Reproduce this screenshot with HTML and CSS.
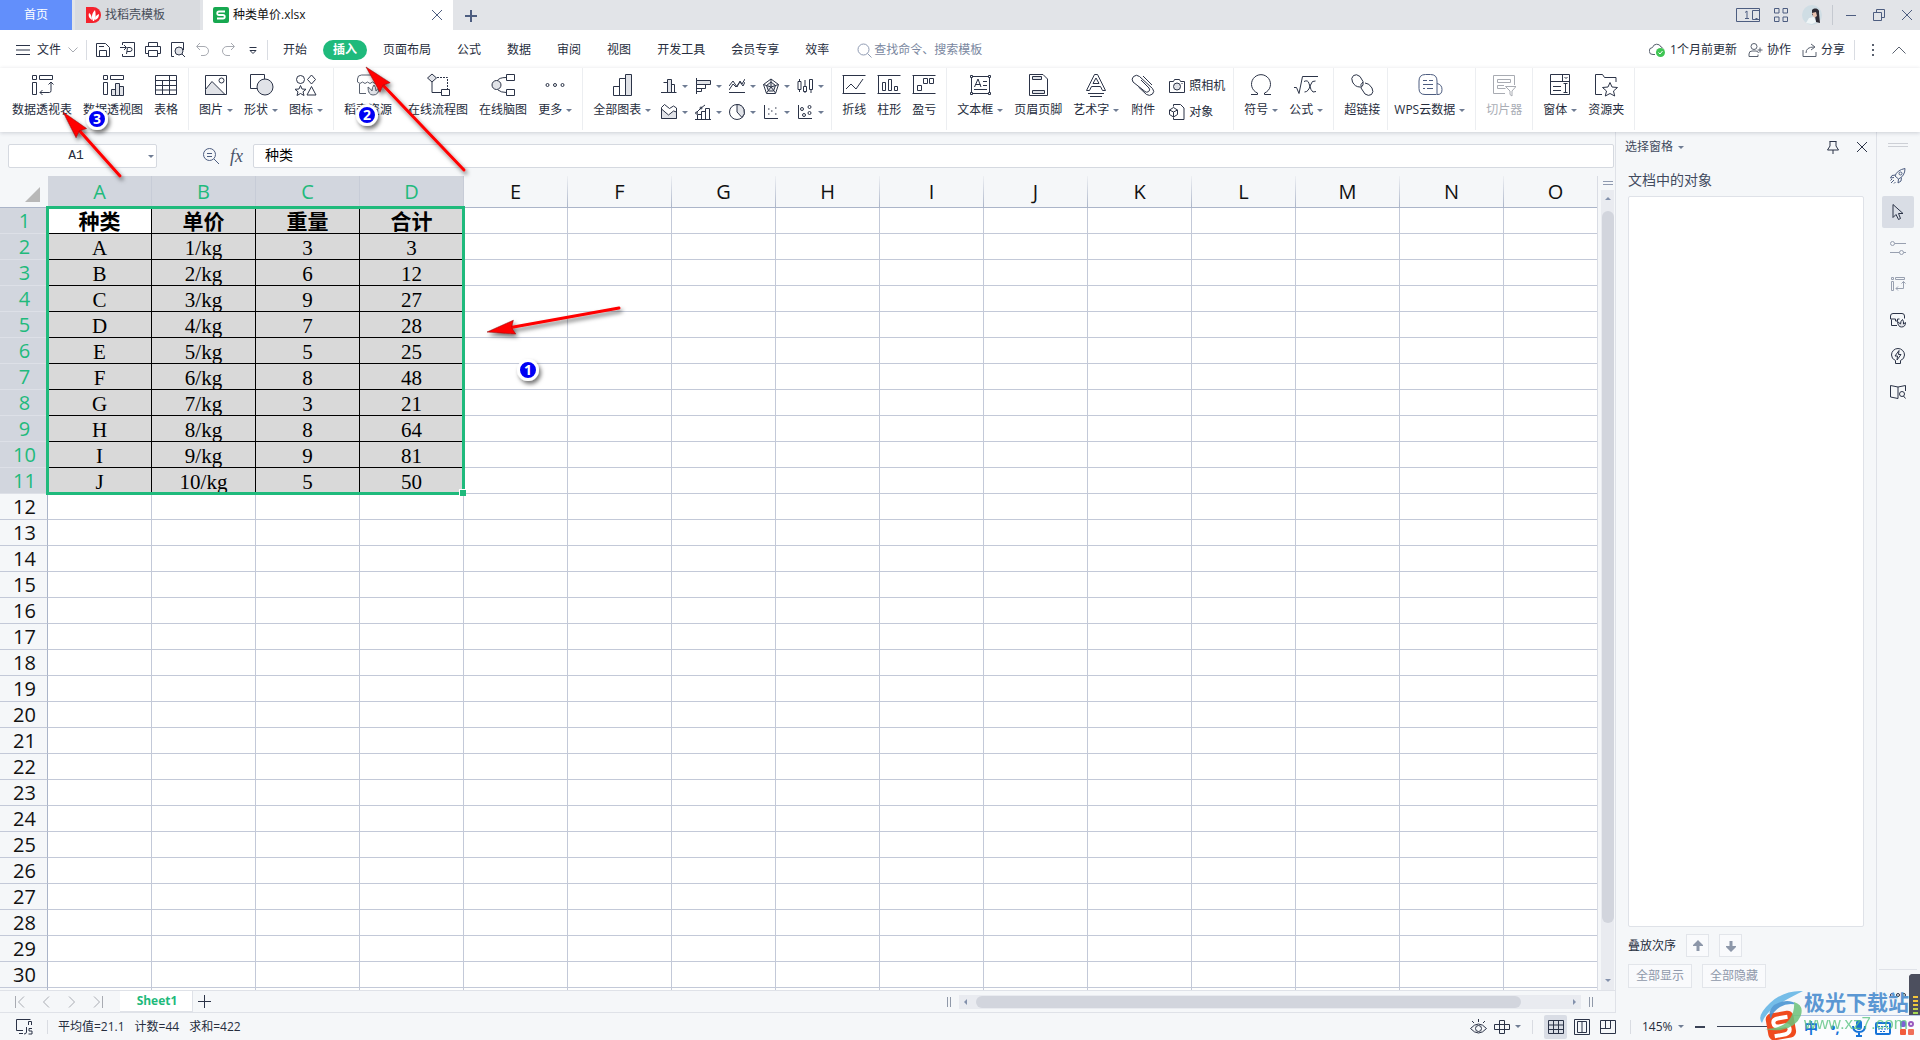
FILE: index.html
```html
<!DOCTYPE html>
<html lang="zh-CN">
<head>
<meta charset="utf-8">
<title>种类单价.xlsx</title>
<link rel="stylesheet" href="styles.css">
</head>
<body>
<header class="titlebar">
  <button class="tab tab-home">首页</button>
  <button class="tab tab-docer">
    <svg width="15" height="16" viewBox="0 0 15 16"><path fill="#f5222d" d="M0 0h7a8 8 0 0 1 0 16H0z"/><path fill="#fff" d="M7 14C5 10 6 6 9 3c1 4 1 8-1 11zM6 13C3 11 2 9 3 6c2 1 3 4 3 7zM9 13c0-3 1-5 4-6 0 3-1 5-4 6z"/></svg>
    找稻壳模板
  </button>
  <div class="tab tab-file">
    <svg width="16" height="16" viewBox="0 0 16 16"><rect width="16" height="16" rx="2" fill="#17a850"/><path d="M12 4.500H6a1.700 1.700 0 0 0 0 3.500h4a1.700 1.700 0 0 1 0 3.500H4" fill="none" stroke="#fff" stroke-width="1.8"/></svg>
    <span>种类单价.xlsx</span>
    <button class="tab-close" aria-label="关闭标签"><svg width="10" height="10" viewBox="0 0 10 10" class="slate"><path d="M0 0l10 10M10 0L0 10"/></svg></button>
  </div>
  <button class="new-tab" aria-label="新建"><svg width="12" height="12" viewBox="0 0 12 12" class="slate"><path d="M6 0v12M0 6h12" stroke-width="2"/></svg></button>
  <div class="window-tools">
    <svg width="24" height="14" viewBox="0 0 24 14" class="slate"><path d="M.5.5h23v13H.5zM23 2.500h-6.500v9H23M19.500 10.500h2M9 4.500l2-1.500V11M9 10.500h4"/></svg>
    <svg width="14" height="14" viewBox="0 0 14 14" class="slate"><path d="M.5.5h4.500v4.500H.5zM9 .5h4.500v4.500H9zM.5 9h4.500v4.500H.5zM9 9h4.500v4.500H9z"/></svg>
    <svg width="20" height="20" viewBox="0 0 20 20"><circle cx="10" cy="10" r="10" fill="#cfdde4"/><path d="M10 5c3-3 8-1 7 3l1 10-4-1-1-6-3-1z" fill="#2c2a33"/><path d="M10 8l4-1 1 4-3 2z" fill="#e6c1ae"/><path d="M7 13l5-1 2 5-4 2-6-1z" fill="#eff5f7"/></svg>
    <i class="divider"></i>
    <button aria-label="最小化"><svg width="12" height="12" viewBox="0 0 12 12" class="slate"><path d="M1 6.500h10"/></svg></button>
    <button aria-label="还原"><svg width="12" height="12" viewBox="0 0 12 12" class="slate"><path d="M.5 3.500h8v8h-8zM3.500 3.500v-3h8v8h-3"/></svg></button>
    <button aria-label="关闭"><svg width="12" height="12" viewBox="0 0 12 12" class="slate"><path d="M1 1l10 10M11 1L1 11"/></svg></button>
  </div>
</header>

<nav class="menubar">
  <button class="file-menu">
    <svg width="14" height="10" viewBox="0 0 14 10" class="ink"><path d="M0 .5h14M0 5h14M0 9.500h14"/></svg>
    文件
    <svg width="10" height="6" viewBox="0 0 10 6" class="pale"><path d="M.5.5L5 5 9.500.5"/></svg>
  </button>
  <i class="divider"></i>
  <div class="quick">
    <button aria-label="保存"><svg width="16" height="16" viewBox="0 0 16 16" class="ink"><path d="M1.500 1.500h9l4 4v9h-13zM4.500 14V8.500h7V14M4 4.500h5"/></svg></button>
    <button aria-label="输出为PDF"><svg width="16" height="16" viewBox="0 0 16 16" class="ink"><path d="M2.500 3V.5h12v14h-12V12M0 5.500h6M4 3l2.500 2.500L4 8M6.500 12l1-6.500H10a2 2 0 0 1 0 4H7"/></svg></button>
    <button aria-label="打印"><svg width="16" height="16" viewBox="0 0 16 16" class="ink"><path d="M3.500 4V.5h9V4M3.500 11.500h-3v-7h15v7h-3M3.500 8.500h9v6h-9z"/></svg></button>
    <button aria-label="打印预览"><svg width="16" height="16" viewBox="0 0 16 16" class="ink"><path d="M4 14.500H1.500V.5h12V8M12 12l3 3"/><circle cx="9" cy="9" r="4" fill="#dfe1e6"/></svg></button>
    <button aria-label="撤销"><svg width="16" height="16" viewBox="0 0 16 16" class="pale"><path d="M5 1L1.500 4.500 5 8M2 4.500h7a4.500 4.500 0 0 1 0 9H6"/></svg></button>
    <button aria-label="恢复"><svg width="16" height="16" viewBox="0 0 16 16" class="pale"><path d="M11 1l3.500 3.500L11 8M14 4.500H7a4.500 4.500 0 0 0 0 9h3"/></svg></button>
    <button aria-label="自定义快速访问"><svg width="16" height="16" viewBox="0 0 16 16" class="ink"><path d="M4.500 5.500h7M5 8.500l3 3 3-3z"/></svg></button>
  </div>
  <i class="divider"></i>
  <div class="menu-tabs">
    <button>开始</button><button class="active">插入</button><button>页面布局</button><button>公式</button><button>数据</button><button>审阅</button><button>视图</button><button>开发工具</button><button>会员专享</button><button>效率</button>
  </div>
  <label class="search">
    <svg width="15" height="15" viewBox="0 0 15 15"><circle cx="6.500" cy="6.500" r="5.500"/><path d="M10.500 10.500l4 4"/></svg>
    <input type="text" placeholder="查找命令、搜索模板" aria-label="查找命令、搜索模板">
  </label>
  <div class="account">
    <button><svg width="17" height="15" viewBox="0 0 17 15" class="grey"><path d="M6 11.500H4a3.500 3.500 0 0 1-.5-7 4.500 4.500 0 0 1 8.500-.5 3 3 0 0 1 2 1.500"/><circle cx="11.500" cy="9.500" r="4.500" fill="#3fc553" stroke="none"/><path d="M9.500 9.500l1.500 1.500 2.500-3" stroke="#fff"/></svg>1个月前更新</button>
    <button><svg width="15" height="14" viewBox="0 0 15 14" class="grey"><circle cx="6" cy="3.500" r="3"/><path d="M1 13.500V11q0-3 3-3h4q2 0 2.500 2M1 13.500h9v-2M12 4.500v5M9.500 7h5"/></svg>协作</button>
    <button><svg width="15" height="14" viewBox="0 0 15 14" class="grey"><path d="M1 7v6.500h13V9M4 10q0-6 8-6M9 1l4 3-4 3"/></svg>分享</button>
    <i class="divider"></i>
    <button aria-label="更多"><svg width="16" height="14" viewBox="0 0 16 14"><path fill="#59616f" d="M7 1h2v2H7zM7 6h2v2H7zM7 11h2v2H7z"/></svg></button>
    <button aria-label="收起功能区"><svg width="14" height="8" viewBox="0 0 14 8" class="grey"><path d="M.5 7.500L7 1l6.500 6.500"/></svg></button>
  </div>
</nav>

<section class="ribbon">
  <div class="group">
    <button><svg width="24" height="24" viewBox="0 0 24 24" class="ink"><path d="M2.500 2.500h4v4h-4zM9.500 2.500h13v4h-13zM2.500 9.500h4v12h-4zM10 19.500h9.500q1.500 0 1.500-2V9M12.500 17L10 19.500l2.500 2.500M18.500 11.500L21 9l2.500 2.500"/></svg><span>数据透视表</span></button>
    <button><svg width="24" height="24" viewBox="0 0 24 24" class="ink"><path d="M2.500 2.500h4v4h-4zM9.500 2.500h13v4h-13zM2.500 9.500h4v12h-4z"/><path class="tint" d="M10.500 16.500h4v6h-4zM14.500 10.500h4v12h-4zM18.500 13.500h4v9h-4z"/></svg><span>数据透视图</span></button>
    <button><svg width="24" height="24" viewBox="0 0 24 24" class="ink"><path d="M1.500 2.500h21v19h-21zM1.500 7.500h21M1.500 12.500h21M1.500 17h21M8.500 7.500V22M15.500 2.500V22"/></svg><span>表格</span></button>
  </div>
  <div class="group">
    <button><svg width="24" height="24" viewBox="0 0 24 24" class="ink"><path d="M1.500 2.500h21v19h-21z"/><path class="tint" d="M1.500 16.500L8 8.500l13 13h-19.500z"/><circle cx="17.500" cy="7.500" r="2.500"/></svg><span class="drop">图片</span></button>
    <button><svg width="26" height="24" viewBox="0 0 26 24" class="ink"><path d="M2.500 1.500h14v14h-14z"/><circle class="tint" cx="17" cy="14" r="8"/></svg><span class="drop">形状</span></button>
    <button><svg width="24" height="24" viewBox="0 0 24 24" class="ink"><circle cx="6.500" cy="6.500" r="4"/><path d="M17.500 2l4 4.500-4 4.500-4-4.500zM17.500 13.500l4.500 8.500h-9zM6.500 12.500l1.500 3.500 4 .3-3 2.500 1 3.700-3.500-2-3.500 2 1-3.700-3-2.500 4-.3z"/></svg><span class="drop">图标</span></button>
  </div>
  <div class="group">
    <button class="wide"><svg width="24" height="24" viewBox="0 0 24 24" class="grey"><path d="M10 20.500H3.500V11M1.500 9V6q0-4 4-4h12q4 0 4 4v3M1.500 9q2.500 3 5 0 2.500 3 5 0 2.500 3 5 0 2.500 3 5 0"/><path class="tint" d="M17 22q-5 0-5-8 3 2 4 4 0-4 2-6 2 2 2 6 1-2 3-3 0 7-6 7z"/></svg><span>稻壳资源</span></button>
    <button><svg width="24" height="24" viewBox="0 0 24 24" class="ink"><path class="tint" d="M6 1l4.500 4L6 9 1.500 5z"/><path d="M6 9v10.500h9.500M15.500 16.500h8v6h-8z"/><path d="M11 4.500h10.500V16" stroke-dasharray="2 1"/></svg><span>在线流程图</span></button>
    <button><svg width="24" height="24" viewBox="0 0 24 24" class="ink"><path d="M15.500 1.500h8v6h-8zM15.500 16.500h8v6h-8zM6 8q2-3.500 9-3.500M7 17q3 2.500 8.500 2.500"/><circle class="tint" cx="5.500" cy="12" r="4.500"/></svg><span>在线脑图</span></button>
    <button><svg width="24" height="24" viewBox="0 0 24 24" class="ink"><circle cx="4.500" cy="12" r="1.500"/><circle cx="12" cy="12" r="1.500"/><circle cx="19.500" cy="12" r="1.500"/></svg><span class="drop">更多</span></button>
  </div>
  <div class="group flush">
    <button><svg width="24" height="24" viewBox="0 0 24 24" class="ink"><path d="M3.500 13.500h6v9h-6zM9.500 5.500h6v17h-6z"/><path class="tint" d="M15.500 1.500h6v21h-6z"/></svg><span class="drop">全部图表</span></button>
    <div class="minis">
      <button aria-label="柱形图"><svg width="16" height="16" viewBox="0 0 16 16" class="ink"><path d="M2.500 4.500h4v10h-4M10.500 6.500h3v8M0 14.500h15.500"/><path class="tint" d="M6.500 1.500h4v13h-4z"/></svg></button>
      <button aria-label="条形图"><svg width="16" height="16" viewBox="0 0 16 16" class="ink"><path d="M1.500 0v16M1.500 6.500h9v4h-9M1.500 10.500h5v3h-5"/><path class="tint" d="M1.500 2.500h14v4h-14z"/></svg></button>
      <button aria-label="折线图"><svg width="16" height="16" viewBox="0 0 16 16" class="ink"><path d="M0 8l4-5 4 6 3-6 2 3 3-5M0 12l4-6 3 3 4-5 3 4 2-4M0 14.500h16"/></svg></button>
      <button aria-label="雷达图"><svg width="16" height="16" viewBox="0 0 16 16" class="ink"><path d="M8 1l7.500 5.500-3 9h-9l-3-9z"/><path class="tint" d="M8 4l4.500 3.500-2 5.500h-5l-2-5.500z"/><path d="M8 1v8M.5 6.500L8 9l7.500-2.500M3.500 15L8 9l4.500 6"/></svg></button>
      <button aria-label="股价图"><svg width="16" height="16" viewBox="0 0 16 16" class="ink"><path d="M1 3.500h3v8H1zM2.500 1v2.500M2.500 11.500V14M6.500 8.500h3v5h-3zM8 2v6.500M8 13.500V15M12.500 1.500h3v10h-3zM14 11.500V15"/></svg></button>
      <button aria-label="面积图"><svg width="16" height="16" viewBox="0 0 16 16" class="ink"><path d="M.5 14.500V3.500l3-3 5 4 4-2.500 3 2v10.500"/><path class="tint" d="M.5 5l7 6 5-4 3 1v6.500H.5z"/></svg></button>
      <button aria-label="组合图"><svg width="16" height="16" viewBox="0 0 16 16" class="ink"><path d="M2.500 10.500h4v5h-4zM6.500 7.500h4v8h-4zM10.500 4.500h4v11h-4zM0 15.500h16M1.500 8.500L6 4l4-3"/><circle cx="1.500" cy="9" r="1"/><circle cx="6" cy="4" r="1"/></svg></button>
      <button aria-label="饼图"><svg width="16" height="16" viewBox="0 0 16 16" class="ink"><circle cx="8" cy="8" r="7.500"/><path class="tint" d="M8 .5V8l5 5.500A7.500 7.500 0 0 0 8 .5z"/></svg></button>
      <button aria-label="散点图"><svg width="16" height="16" viewBox="0 0 16 16" class="ink"><path d="M1.500 1v13.500H15M5 10h1.500M8 7h1.500M5 5h1.500M12 4h1.500M12 10h1.500"/></svg></button>
      <button aria-label="气泡图"><svg width="16" height="16" viewBox="0 0 16 16" class="ink"><path d="M1.500 1v13.500H15"/><circle cx="5" cy="5" r="1.500"/><circle cx="12.500" cy="3" r="1.500"/><circle cx="7" cy="11" r="1.500"/><circle cx="12.500" cy="9" r="1.500"/></svg></button>
    </div>
  </div>
  <div class="group">
    <button><svg width="24" height="24" viewBox="0 0 24 24" class="ink"><path d="M.5 2.500h23M.5 20.500h23M1.500 2v19M4 16l5-5 5 5 7-10"/></svg><span>折线</span></button>
    <button><svg width="24" height="24" viewBox="0 0 24 24" class="ink"><path d="M.5 2.500h23M.5 20.500h23M1.500 2v19M5.500 17.500v-8h3v8zM11.500 17.500V6.500h3v11zM17.500 17.500v-4h3v4z"/></svg><span>柱形</span></button>
    <button><svg width="24" height="24" viewBox="0 0 24 24" class="ink"><path d="M.5 2.500h23M.5 20.500h23M1.500 2v19M5.500 12.500h4v5h-4zM11.500 5.500h4v5h-4zM17.500 5.500h4v5h-4z"/></svg><span>盈亏</span></button>
  </div>
  <div class="group">
    <button><svg width="24" height="24" viewBox="0 0 24 24" class="ink"><path d="M3.500 3.500h18v17h-18zM6.500 14L10 6l3 8M7.500 11.500h5M15 8.500h4M15 12.500h4M6 16.500h13"/><path fill="#fff" d="M2.500 2.500h2v2h-2zM20.500 2.500h2v2h-2zM2.500 19.500h2v2h-2zM20.500 19.500h2v2h-2z"/></svg><span class="drop">文本框</span></button>
    <button><svg width="24" height="24" viewBox="0 0 24 24" class="ink"><path d="M3.500 1.500H17L21.500 6v16.500h-18z"/><path class="tint" d="M6.500 3.500h9v3h-9zM6.500 17.500h12v3h-12z"/></svg><span>页眉页脚</span></button>
    <button><svg width="24" height="24" viewBox="0 0 24 24" class="ink"><path d="M2.500 17.500L10.500 1.500h3l8 16h-3l-2-4h-9l-2 4zM9 10.500h6L12 5zM4 20.500h16M6 23.500h12"/></svg><span class="drop">艺术字</span></button>
    <button><svg width="26" height="24" viewBox="0 0 26 24" class="ink"><path d="M11 7l8 8q1.500 2-.3 3.500-2 1.500-3.700 0L3 9Q1 6 3.500 3.500q3-2.500 6 0l13 12q2.500 3 0 5.500-3 2.500-6 .5L8.500 14M13 3l9 9"/></svg><span>附件</span></button>
    <div class="pair">
      <button><svg width="16" height="16" viewBox="0 0 16 16" class="ink"><path d="M.5 3.500h4l1-2h5l1 2h4v11H.5z"/><circle class="tint" cx="8" cy="8.500" r="3.500"/><path d="M12.500 5.500h1"/></svg>照相机</button>
      <button><svg width="16" height="16" viewBox="0 0 16 16" class="ink"><path d="M4.500 2.500V.5h7l3.500 3.500v11.500H4.500v-2M4.500 3.500L8.500 6v4.500L4.500 13 .5 10.500V6zM.5 6l4 2 4-2M4.500 8v5"/></svg>对象</button>
    </div>
  </div>
  <div class="group">
    <button><svg width="24" height="24" viewBox="0 0 24 24" class="ink"><path d="M2 21.500h6.500v-1.500A9.500 9.500 0 1 1 15.500 20v1.500H22"/></svg><span class="drop">符号</span></button>
    <button><svg width="24" height="24" viewBox="0 0 24 24" class="ink"><path d="M0 14.500h2.500L5 20.500 8.500 3.500H24M10 8.500q4-2 5 2l2 6q1.500 4 5 2M21.500 8q-3.500-1-5 4-2 7-6 7"/></svg><span class="drop">公式</span></button>
  </div>
  <div class="group tight">
    <button><svg width="24" height="24" viewBox="0 0 24 24" class="ink"><path d="M10 14Q5 14 2.500 9 .5 5 3.500 2.500q3-2 6.500 1l3 5q1 4-2 6M15 10q4 0 7 5 2 4-.5 6.500-3 2-6.500-.5l-4-6q-1-4 2-6"/></svg><span>超链接</span></button>
  </div>
  <div class="group cloud">
    <button><svg width="26" height="24" viewBox="0 0 26 24" class="slate"><path d="M19.500 21.500H8q-6 0-6-6V8q0-6.500 6.500-6.500h5q6.500 0 6.500 6.500v13.500q5 .5 5-5 0-5-5-6M6 7.500h4M12 7.500h4M6 11.500h10M6 15.500h2M10 15.500h6"/></svg><span class="drop">WPS云数据</span></button>
  </div>
  <div class="group">
    <button disabled><svg width="24" height="24" viewBox="0 0 24 24" class="pale"><path d="M13 20.500H1.500v-18h21V12M5.500 6.500h13v3h-13zM12 12.500H5.500v3h8M13.500 13.500h10.500l-4 4.500v5l-2-1.500V18z"/></svg><span>切片器</span></button>
  </div>
  <div class="group">
    <button><svg width="24" height="24" viewBox="0 0 24 24" class="ink"><path d="M2.500 1.500h19v20h-19zM2.500 8.500h19M14.500 1.500v7M16.500 4l1.500 1.500L19.500 4M5 13.500h8M5 17.500h8M17.500 10.500v9M15.500 10.500h4M15.500 19.500h4"/></svg><span class="drop">窗体</span></button>
    <button><svg width="24" height="24" viewBox="0 0 24 24" class="ink"><path d="M8 21.500H1.500v-20h7l2 3h11.500V9M16 9.500l2 4.500 5.500.5-4 3.500 1.200 5-4.700-2.500-4.700 2.500 1.200-5-4-3.500 5.500-.5z"/></svg><span>资源夹</span></button>
  </div>
</section>

<main class="workspace">
  <section class="book">
    <div class="formula-bar">
      <div class="name-box"><input type="text" value="A1" aria-label="名称框"><button aria-label="名称列表" class="drop"></button></div>
      <svg width="18" height="18" viewBox="0 0 18 18" class="slate zoom-icon"><circle cx="7.500" cy="7.500" r="6"/><path d="M12 12l5 5M5 6.500h5M5 9.500h5"/></svg>
      <button class="fx">fx</button>
      <input class="formula" type="text" value="种类" aria-label="编辑栏">
    </div>

    <div class="sheet">
      <div class="grid">
        <table>
          <colgroup><col class="c-head"><col span="15" class="c-data"></colgroup>
          <thead>
            <tr><th class="corner"><svg width="15" height="15" viewBox="0 0 15 15"><path d="M15 0v15H0z" fill="#b8b8b8"/></svg></th><th class="on">A</th><th class="on">B</th><th class="on">C</th><th class="on">D</th><th>E</th><th>F</th><th>G</th><th>H</th><th>I</th><th>J</th><th>K</th><th>L</th><th>M</th><th>N</th><th>O</th></tr>
          </thead>
          <tbody class="picked">
            <tr class="names"><th>1</th><td class="current">种类</td><td>单价</td><td>重量</td><td>合计</td><td colspan="11" class="blank"></td></tr>
            <tr><th>2</th><td>A</td><td>1/kg</td><td>3</td><td>3</td><td colspan="11" class="blank"></td></tr>
            <tr><th>3</th><td>B</td><td>2/kg</td><td>6</td><td>12</td><td colspan="11" class="blank"></td></tr>
            <tr><th>4</th><td>C</td><td>3/kg</td><td>9</td><td>27</td><td colspan="11" class="blank"></td></tr>
            <tr><th>5</th><td>D</td><td>4/kg</td><td>7</td><td>28</td><td colspan="11" class="blank"></td></tr>
            <tr><th>6</th><td>E</td><td>5/kg</td><td>5</td><td>25</td><td colspan="11" class="blank"></td></tr>
            <tr><th>7</th><td>F</td><td>6/kg</td><td>8</td><td>48</td><td colspan="11" class="blank"></td></tr>
            <tr><th>8</th><td>G</td><td>7/kg</td><td>3</td><td>21</td><td colspan="11" class="blank"></td></tr>
            <tr><th>9</th><td>H</td><td>8/kg</td><td>8</td><td>64</td><td colspan="11" class="blank"></td></tr>
            <tr><th>10</th><td>I</td><td>9/kg</td><td>9</td><td>81</td><td colspan="11" class="blank"></td></tr>
            <tr><th>11</th><td>J</td><td>10/kg</td><td>5</td><td>50</td><td colspan="11" class="blank"></td></tr>
          </tbody>
          <tbody>
            <tr><th>12</th><td colspan="15" class="blank"></td></tr>
            <tr><th>13</th><td colspan="15" class="blank"></td></tr>
            <tr><th>14</th><td colspan="15" class="blank"></td></tr>
            <tr><th>15</th><td colspan="15" class="blank"></td></tr>
            <tr><th>16</th><td colspan="15" class="blank"></td></tr>
            <tr><th>17</th><td colspan="15" class="blank"></td></tr>
            <tr><th>18</th><td colspan="15" class="blank"></td></tr>
            <tr><th>19</th><td colspan="15" class="blank"></td></tr>
            <tr><th>20</th><td colspan="15" class="blank"></td></tr>
            <tr><th>21</th><td colspan="15" class="blank"></td></tr>
            <tr><th>22</th><td colspan="15" class="blank"></td></tr>
            <tr><th>23</th><td colspan="15" class="blank"></td></tr>
            <tr><th>24</th><td colspan="15" class="blank"></td></tr>
            <tr><th>25</th><td colspan="15" class="blank"></td></tr>
            <tr><th>26</th><td colspan="15" class="blank"></td></tr>
            <tr><th>27</th><td colspan="15" class="blank"></td></tr>
            <tr><th>28</th><td colspan="15" class="blank"></td></tr>
            <tr><th>29</th><td colspan="15" class="blank"></td></tr>
            <tr><th>30</th><td colspan="15" class="blank"></td></tr>
            <tr><th></th><td colspan="15" class="blank"></td></tr>
          </tbody>
        </table>
        <div class="selection"></div>
      </div>
      <div class="vscroll">
        <i class="split"></i>
        <div class="vtrack"><i class="arrow up"></i><i class="vthumb"></i><i class="arrow down"></i></div>
      </div>
    </div>

    <div class="sheet-bar">
      <div class="sheet-nav">
        <button aria-label="第一个"><svg width="10" height="12" viewBox="0 0 10 12" class="pale"><path d="M.5 0v12M9 .5L3.500 6 9 11.500"/></svg></button>
        <button aria-label="上一个"><svg width="10" height="12" viewBox="0 0 10 12" class="pale"><path d="M8 .5L2.500 6 8 11.500"/></svg></button>
        <button aria-label="下一个"><svg width="10" height="12" viewBox="0 0 10 12" class="pale"><path d="M2 .5L7.500 6 2 11.500"/></svg></button>
        <button aria-label="最后一个"><svg width="10" height="12" viewBox="0 0 10 12" class="pale"><path d="M9.500 0v12M1 .5L6.500 6 1 11.500"/></svg></button>
      </div>
      <button class="sheet-tab">Sheet1</button>
      <button class="add-sheet" aria-label="新建工作表"><svg width="13" height="13" viewBox="0 0 13 13" class="ink"><path d="M6.500 0v13M0 6.500h13"/></svg></button>
      <div class="hscroll">
        <i class="grip"></i>
        <div class="htrack"><i class="arrow left"></i><i class="hthumb"></i><i class="arrow right"></i></div>
        <i class="grip"></i>
      </div>
    </div>
  </section>

  <aside class="pane">
    <div class="pane-head">
      <button class="drop">选择窗格</button>
      <button class="pin" aria-label="固定"><svg width="14" height="14" viewBox="0 0 14 14" class="ink"><path d="M3.500 1.500h7M4 1.500V6L1.500 10h11L10 6V1.500M7 10v4"/></svg></button>
      <button aria-label="关闭窗格"><svg width="12" height="12" viewBox="0 0 12 12" class="ink"><path d="M1 1l10 10M11 1L1 11"/></svg></button>
    </div>
    <h2>文档中的对象</h2>
    <div class="object-list"></div>
    <div class="order"><span>叠放次序</span>
      <button aria-label="上移"><svg width="10" height="12" viewBox="0 0 10 12"><path fill="#8d97a9" d="M5 0l5 5v1H6.500v5h-3V6H0V5z"/></svg></button>
      <button aria-label="下移"><svg width="10" height="12" viewBox="0 0 10 12"><path fill="#8d97a9" d="M5 12l5-5V6H6.500V1h-3v5H0v1z"/></svg></button>
    </div>
    <div class="show"><button>全部显示</button><button>全部隐藏</button></div>
  </aside>

  <nav class="rail">
    <i class="handle"></i>
    <button aria-label="启动"><svg width="16" height="16" viewBox="0 0 16 16" class="slate"><path d="M5 8q2-6 10-7.500Q15 8 8.500 11zM5.500 7L2 7.500.5 10 4 9.500M8.500 11L8 15l3-2 .5-3.500M4 12l-3 3M2 11l-1.500 1.500M5.500 14L4 15.500"/><circle cx="10.500" cy="5.500" r="1.500"/></svg></button>
    <button class="active" aria-label="选择"><svg width="16" height="16" viewBox="0 0 16 16" class="ink"><path d="M3 .5v13l3-3 2.500 5 2-1L8.500 9.500h4.500z"/></svg></button>
    <button aria-label="属性"><svg width="16" height="16" viewBox="0 0 16 16" class="mid"><circle cx="2.500" cy="3.500" r="2"/><circle cx="11.500" cy="12.500" r="2"/><path d="M4.500 3.500H16M0 12.500h9.500M13.500 12.500H16"/></svg></button>
    <button aria-label="透视表"><svg width="16" height="16" viewBox="0 0 16 16" class="mid"><path d="M1.500 1.500h2v2h-2zM5.500 1.500h9v2h-9zM1.500 5.500h2v9h-2zM6 12.500h7.500v-7M8 10.500l-2 2 2 2M11.500 7.500l2-2 2 2"/></svg></button>
    <button aria-label="稻壳资源"><svg width="16" height="16" viewBox="0 0 16 16" class="ink"><path d="M7 13.500H1.500V7.500M.5 7V4q0-2.500 2.500-2.500h9q2.500 0 2.500 2.500v2.500M.5 7h5v2h2V7h2"/><path class="tint" d="M11.500 15Q8 15 7.500 9.500l3 2.500q0-3 2-4.500 1.500 2 1 4.500l2-1.500q0 4.500-4 4.500z"/></svg></button>
    <button aria-label="灵感"><svg width="16" height="16" viewBox="0 0 16 16" class="ink"><path d="M5.500 12.500Q1.500 11 1.500 7a6.500 6.500 0 0 1 13 0q0 4-4 5.500v3h-5zM9 2.500L5 8h2.500L7 12l4-5.500H8.500z"/></svg></button>
    <button aria-label="帮助"><svg width="16" height="16" viewBox="0 0 16 16" class="ink"><path d="M8 14.500L.5 13V1.500L8 3l7.500-1.500V7M8 3v11.500"/><circle cx="12" cy="10" r="2.500"/><path d="M13.500 12l2 2.500"/></svg></button>
    <button class="more" aria-label="更多"><svg width="16" height="4" viewBox="0 0 16 4" class="ink"><circle cx="2" cy="2" r="1.500"/><circle cx="8" cy="2" r="1.500"/><circle cx="14" cy="2" r="1.500"/></svg></button>
  </nav>
</main>

<footer class="statusbar">
  <svg width="17" height="16" viewBox="0 0 17 16" class="ink macro"><path d="M7 11.500H.5v-11h14M3 14.500h4M10.500 8v5q0 2-2.500 2M16 9.500h-3v2.500h3v3h-3.500M12.500 6V2.500h3V6"/></svg>
  <i class="divider"></i>
  <p class="stats"><span>平均值=21.1</span><span>计数=44</span><span>求和=422</span></p>
  <div class="views">
    <button aria-label="护眼模式"><svg width="17" height="16" viewBox="0 0 17 16" class="ink"><path d="M.5 9.500q8-9 16 0-8 9-16 0zM8.500 0v3M2 2l2 2M15 2l-2 2"/><circle cx="8.500" cy="9.500" r="3"/></svg></button>
    <button class="drop" aria-label="阅读模式"><svg width="16" height="16" viewBox="0 0 16 16" class="ink"><path d="M5.500 1.500h5v13h-5zM.5 5.500h15v5H.5z"/></svg></button>
    <i class="divider"></i>
    <button class="view active" aria-label="普通视图"><svg width="16" height="14" viewBox="0 0 16 14" class="ink"><path d="M.5.5h15v13H.5zM.5 5h15M.5 9.500h15M5.500.5v13M10.500.5v13"/></svg></button>
    <button class="view" aria-label="页面布局"><svg width="16" height="16" viewBox="0 0 16 16" class="ink"><path d="M.5.5h15v15H.5zM3.500 2.500h9v11h-9zM8 2.500v11"/></svg></button>
    <button class="view" aria-label="分页预览"><svg width="16" height="14" viewBox="0 0 16 14" class="ink"><path d="M.5.5h15v13H.5zM.5 8.500h10M5.500.5v8M10.500.5v8"/></svg></button>
    <i class="divider"></i>
    <button class="drop zoom-value">145%</button>
    <button aria-label="缩小"><svg width="10" height="4" viewBox="0 0 10 4"><path d="M0 1h10v2H0z" fill="#3a4256"/></svg></button>
    <input class="zoom-slider" type="range" min="10" max="400" value="145" aria-label="缩放">
  </div>
</footer>

<div class="tray">
  <div class="meter"></div>
  <div class="ime"><span>中</span><span>•,</span>
    <svg width="14" height="18" viewBox="0 0 14 18"><rect x="4" y="1" width="6" height="10" rx="3" fill="#1673d8"/><path d="M1 7q0 6 6 6t6-6M7 13v4M4 17h6" fill="none" stroke="#1673d8" stroke-width="2"/></svg>
    <svg width="16" height="13" viewBox="0 0 16 13"><rect x="1" y="1" width="14" height="11" rx="1" stroke="#1673d8" stroke-width="2"/><path d="M3 4.500h10M3 7h10M5 9.500h6" stroke="#1673d8" stroke-dasharray="2 1"/></svg>
    <svg width="14" height="14" viewBox="0 0 14 14"><rect width="6" height="6" rx="2" fill="#7d63d6"/><circle cx="11" cy="3" r="2" stroke="#9a5abf" stroke-width="2"/><rect y="8" width="6" height="6" rx="1" fill="#f25c3c"/><rect x="8" y="8" width="6" height="6" rx="1" fill="#f0705a"/></svg>
  </div>
  <div class="brand">
    <svg width="44" height="50" viewBox="0 0 44 50">
      <g transform="rotate(-10 21 36)"><rect x="7" y="22" width="28" height="27" rx="6" fill="#f04a1d"/><path d="M29 28H19q-5 0-5 4t5 4h5q5 0 5 4t-5 5H13" fill="none" stroke="#fff" stroke-width="4"/></g>
      <g opacity=".85"><path d="M43 1Q24 0 10 13-4 26 2 33q3-10 17-19Q29 8 43 1z" fill="#5fb3e6"/><path d="M14 15q14-8 24 0-10-3-18 2-8 5-9 12-4-7 3-14z" fill="#3f8fd0"/><path d="M34 12q10 3 7 13-4 12-20 15-8 1-16-1 16 0 24-9 6-8 5-18z" fill="#6cc27a"/></g>
    </svg>
    <div class="brand-name"><b>极光下载站</b><span>www.xz7.com</span></div>
  </div>
</div>

<svg class="marks" width="640" height="400" viewBox="0 0 640 400">
  <defs>
    <filter id="soft" x="-30%" y="-30%" width="160%" height="160%"><feDropShadow dx="2" dy="3" stdDeviation="2" flood-opacity=".55"/></filter>
    <path id="head" d="M0 0l28-7-3 7 3 7z"/>
  </defs>
  <g filter="url(#soft)" fill="#f00" stroke="#f00">
    <g stroke-width="3" stroke-linecap="round"><path d="M78 129l42 47"/><path d="M380 82l84 88"/><path d="M508 328l111-20"/></g>
    <g stroke="#8c1010" stroke-width=".5">
      <use href="#head" transform="translate(63 112) rotate(49)"/>
      <use href="#head" transform="translate(366 67) rotate(47)"/>
      <use href="#head" transform="translate(487 332) rotate(-10)"/>
    </g>
  </g>
  <g filter="url(#soft)" fill="#0404f4" stroke="#fff" stroke-width="3"><circle cx="97" cy="119" r="9.500"/><circle cx="367" cy="115" r="9.500"/><circle cx="528" cy="370" r="9.500"/></g>
  <g class="mark-text"><text x="97" y="124">3</text><text x="367" y="120">2</text><text x="528" y="375">1</text></g>
</svg>
</body>
</html>
```

FILE: styles.css
```css
* { box-sizing: border-box; }

body {
  margin: 0;
  height: 100vh;
  display: flex;
  flex-direction: column;
  position: relative;
  overflow: hidden;
  background: #f5f7f9;
  color: #262d3d;
  font: 12px/16px "Open Sans", "Noto Sans CJK SC", sans-serif;
}

button, input { font: inherit; color: inherit; }
button { border: 0; padding: 0; background: none; white-space: nowrap; }
svg { display: block; flex: none; fill: none; }
i { display: block; flex: none; }
p, h2 { margin: 0; font-weight: 400; }

.ink { stroke: #2b3347; }
.slate { stroke: #4d5d80; }
.grey { stroke: #59616f; }
.mid { stroke: #98a0b0; }
.pale { stroke: #a8abb2; }
.tint { fill: #e1e3e8; }
.divider { width: 1px; height: 20px; background: #d9dce2; }

.drop::after {
  content: "";
  display: inline-block;
  margin-left: 5px;
  vertical-align: 2px;
  border: 3px solid transparent;
  border-top: 3px solid #6f7c93;
  border-bottom: 0;
  width: 0;
}

/* title bar */
.titlebar { display: flex; height: 30px; flex: none; background: #e2e4e8; }
.tab { display: flex; align-items: center; gap: 4px; padding: 0 10px; }
.tab-home { width: 72px; justify-content: center; background: #628ffb; color: #fff; }
.tab-docer { width: 125px; margin: 0 3px; padding: 0 11px; background: #d9dbdf; color: #474d59; }
.tab-file { width: 250px; background: #fff; color: #111; }
.tab-close { margin: 0 1px 0 auto; }
.new-tab { margin-left: 12px; }
.window-tools { margin-left: auto; display: flex; align-items: center; gap: 14px; padding-right: 7px; }
.window-tools .divider { margin: 0 -4px; background: #c5c9d0; }
.window-tools button { margin-left: 2px; }
.new-tab svg { margin-top: 1px; }

/* menu bar */
.menubar { display: flex; align-items: center; height: 38px; padding-top: 2px; flex: none; background: #fff; }
.file-menu { display: flex; align-items: center; gap: 7px; padding: 0 8px 0 16px; }
.quick { display: flex; gap: 9px; padding: 0 6px 0 8px; }
.menu-tabs { display: flex; gap: 6px; margin-left: 5px; }
.menu-tabs button { padding: 2px 10px; border-radius: 10px; }
.menu-tabs .active { background: #1fba7c; color: #fff; font-weight: 700; }
.search { display: flex; align-items: center; gap: 2px; margin-left: 18px; }
.search svg { stroke: #8f9bb3; }
.search input { width: 140px; border: 0; padding: 0; background: none; }
.search input::placeholder { color: #7a87a0; opacity: 1; }
.account { margin-left: auto; display: flex; align-items: center; gap: 11px; padding-right: 14px; }
.account button { display: flex; align-items: center; gap: 4px; }
.account .divider { margin: 0 -1px 0 -2px; }

/* ribbon */
.ribbon {
  display: flex;
  height: 64px;
  flex: none;
  padding-left: 2px;
  background: #fff;
  box-shadow: 0 1px 4px rgba(60, 70, 90, .22);
  position: relative;
}
.group { display: flex; gap: 11px; height: 62px; padding: 5px 10px 0; border-right: 1px solid #eceef1; }
.group.flush { gap: 10px; padding-right: 0; }
.group.tight { padding-right: 7px; }
.group.cloud { padding-left: 6px; }
.group > button { display: flex; flex-direction: column; align-items: center; gap: 5px; height: 48px; }
.group > button.wide { width: 53px; align-items: flex-start; }
.wide svg { margin-left: 12px; }
.group .drop::after { margin-left: 4px; }
.group button:disabled { color: #a9adb5; }
.minis { display: grid; grid-template-columns: repeat(5, 34px); grid-auto-rows: 26px; }
.minis button { display: flex; align-items: center; }
.minis button::after { content: ""; border: 3px solid transparent; border-top-color: #6f7c93; border-bottom: 0; margin-left: 5px; }
.pair { display: grid; grid-auto-rows: 26px; margin-left: 2px; margin-right: -2px; }
.pair button { display: flex; align-items: center; gap: 4px; }

/* workspace */
.workspace { display: flex; flex: 1; min-height: 0; }
.book { flex: 1; min-width: 0; display: flex; flex-direction: column; }
.formula-bar { display: flex; align-items: center; height: 44px; padding: 4px 1px 0 8px; flex: none; }
.name-box { display: flex; align-items: center; width: 149px; height: 24px; border: 1px solid #d5d9e0; border-radius: 2px; background: #fff; }
.name-box input { width: 134px; border: 0; padding: 0; background: none; text-align: center; font: 13px/16px "Liberation Mono", monospace; }
.zoom-icon { margin-left: 45px; }
.fx { margin: 0 8px; width: 17px; font: italic 18px/20px "Liberation Serif", serif; color: #4a5368; }
.formula { flex: 1; min-width: 0; height: 24px; border: 1px solid #d5d9e0; border-radius: 2px; background: #fff; padding: 0 11px 4px; font-size: 14px; color: #000; }

.sheet { flex: 1; min-height: 0; display: flex; }
.grid { flex: 1; min-width: 0; position: relative; overflow: hidden; background: #fff; border-right: 1px solid #d9dce4; }
table { border-collapse: separate; border-spacing: 0; table-layout: fixed; width: 1608px; }
.c-head { width: 48px; }
.c-data { width: 104px; }
th, td { padding: 0; text-align: center; overflow: hidden; border: 0 solid #c3c9d8; border-width: 0 1px 1px 0; }
th { background: #f5f7f9; color: #111; font-size: 20px; line-height: 20px; font-weight: 400; }
thead th { height: 32px; border-color: #aab4c8; border-image: linear-gradient(to bottom, #f0f2f5, #aab4c8) 1; }
thead th.on { background: #d2d6de; color: #1fba7c; border-color: #c7ccd7; border-image: none; }
thead .corner { border-right-color: #f5f7f9; border-image: none; }
.corner svg { margin: 6px 0 0 25px; }
tbody th { height: 26px; border-right-color: #aab4c8; padding-left: 2px; }
.picked th { background: #d2d6de; color: #1fba7c; border-color: #dde0e7; }
td { height: 26px; font: 21px/20px "Liberation Serif", "Noto Sans CJK SC", serif; }
.picked td { padding: 4px 0 1px; background: #d9d9d9; border-color: #000; color: #000; }
.names td { font-weight: 700; }
.picked .current { background: #fff; }
td.blank, .picked td.blank {
  padding: 0;
  border-right: 0;
  border-color: #c3c9d8;
  background: repeating-linear-gradient(to right, #fff 0 103px, #c3c9d8 103px 104px);
}
.selection { position: absolute; left: 46px; top: 30px; width: 419px; height: 289px; border: 3px solid #1fba7c; }
.selection::after { content: ""; position: absolute; right: -4px; bottom: -4px; width: 6px; height: 6px; background: #1fba7c; border: 1px solid #fff; border-width: 1px 0 0 1px; }

.vscroll { width: 17px; padding: 5px 1px 0 3px; display: flex; flex-direction: column; }
.split { height: 4px; margin: 0 1px 5px 2px; border: 1px solid #8f9ab0; border-width: 1px 0; }
.vtrack { flex: 1; display: flex; flex-direction: column; align-items: center; justify-content: space-between; padding: 7px 0 8px; background: #e9ebf0; }
.vthumb { flex: 1; width: 12px; margin: 11px 0 56px; border-radius: 6px; background: #d2d5dd; }
.arrow { border: 3px solid transparent; }
.up { border-bottom-color: #8391ac; border-top: 0; }
.down { border-top-color: #8391ac; border-bottom: 0; }
.left { border-right-color: #8391ac; border-left: 0; }
.right { border-left-color: #8391ac; border-right: 0; }

.sheet-bar { display: flex; align-items: stretch; height: 23px; flex: none; border: 1px solid #dfe2e8; border-width: 1px 0; }
.sheet-nav { display: flex; align-items: center; gap: 16px; width: 120px; padding-left: 15px; }
.sheet-tab { width: 73px; padding-left: 2px; background: #fff; color: #1fba7c; font-weight: 700; border: 1px solid #dfe2e8; border-width: 0 1px 1px 0; }
.add-sheet { padding: 0 5px; }
.hscroll { flex: 0 1 668px; margin-left: auto; display: flex; align-items: center; gap: 8px; padding: 3px 22px 3px 0; }
.grip { width: 4px; height: 10px; border: 1px solid #9099a9; border-width: 0 1px; }
.htrack { flex: 1; display: flex; align-items: center; gap: 9px; height: 14px; padding: 0 5px; background: #e9ebf0; }
.hthumb { flex: 1; height: 12px; border-radius: 6px; background: #d2d5dd; margin-right: 43px; }

/* selection pane */
.pane { width: 261px; flex: none; border-left: 1px solid #dfe2e8; padding: 0 12px; display: flex; flex-direction: column; }
.pane-head { display: flex; align-items: center; height: 30px; gap: 16px; margin: 0 -4px 0 -3px; color: #414a5e; }
.pin { margin-left: auto; }
.pane h2 { font-size: 14px; line-height: 20px; margin: 8px 0 6px; color: #414a5e; }
.object-list { flex: 1; background: #fff; border: 1px solid #dfe2e8; border-radius: 2px; }
.order { display: flex; align-items: center; gap: 10px; margin-top: 7px; }
.order button { width: 23px; height: 23px; display: grid; place-items: center; border: 1px solid #e2e5ea; background: #f9fafc; }
.show { display: flex; gap: 10px; margin: 7px 0 25px; }
.show button { width: 64px; height: 24px; border: 1px solid #e2e5ea; background: #f9fafc; color: #8f98aa; }

/* side rail */
.rail { width: 44px; flex: none; border-left: 1px solid #dfe2e8; display: flex; flex-direction: column; align-items: center; gap: 4px; padding: 11px 1px 16px 0; }
.handle { width: 20px; height: 4px; margin-bottom: 9px; border: 1px solid #cdd0d6; border-width: 1px 0; }
.rail button { width: 32px; height: 32px; display: grid; place-items: center; border-radius: 2px; }
.rail .active { background: #d9dde5; }
.rail .more { margin-top: auto; width: 38px; height: 28px; padding-top: 22px; border-top: 1px solid #dfe2e8; border-radius: 0; }

/* status bar */
.statusbar { display: flex; align-items: center; height: 27px; flex: none; }
.macro { margin: 0 14px 0 16px; }
.statusbar .divider { height: 14px; }
.stats { display: flex; gap: 10px; margin-left: 10px; }
.views { margin-left: auto; display: flex; align-items: center; gap: 7px; }
.views button { display: flex; align-items: center; }
.views .divider { margin: 0 4px; }
.views .view { width: 23px; height: 24px; justify-content: center; }
.view + .view { margin-left: -4px; }
.view.active { background: #d9dde5; border-radius: 2px; }
.zoom-value { width: 46px; }
.zoom-slider { width: 203px; height: 16px; margin: 0 0 0 5px; appearance: none; background: linear-gradient(#3a4256, #3a4256) center / 100% 1px no-repeat; }
.zoom-slider::-webkit-slider-thumb { appearance: none; width: 8px; height: 8px; border-radius: 4px; background: #3a4256; }

/* desktop widgets floating over the corner of the window */
.tray { position: absolute; right: 0; bottom: 0; width: 160px; height: 66px; }
.meter {
  position: absolute; right: 0; top: 0; width: 11px; height: 42px;
  border: 3px solid #4c4f5e; border-width: 6px 2px 0 4px; border-radius: 4px 0 0 0;
  background: repeating-linear-gradient(transparent 0 2px, #4c4f5e 2px 4px), linear-gradient(#4c4f5e 0 14px, #f5c63c 14px 24px, #8be05a 36px);
}
.ime {
  position: absolute; right: 0; bottom: 0; width: 140px; height: 25px;
  display: grid; grid-template-columns: repeat(5, 24px); justify-content: end; align-items: center; justify-items: center;
  padding-right: 1px;
  background: #fbfcfe; border-top: 1px solid #b5c6e4;
  color: #1673d8; font-size: 14px; font-weight: 700;
}
.brand { position: absolute; left: 0; bottom: 0; display: flex; }
.brand-name { display: flex; flex-direction: column; color: #5b97d3; }
.brand-name b { font-size: 21px; line-height: 24px; }
.brand-name span { font: 17px/20px "Liberation Sans", sans-serif; color: #5cc483; opacity: .8; }

/* numbered arrows drawn over the window */
.marks { position: absolute; left: 0; top: 0; pointer-events: none; }
.mark-text { fill: #fff; font: 700 14px "Noto Sans", sans-serif; text-anchor: middle; }
```
